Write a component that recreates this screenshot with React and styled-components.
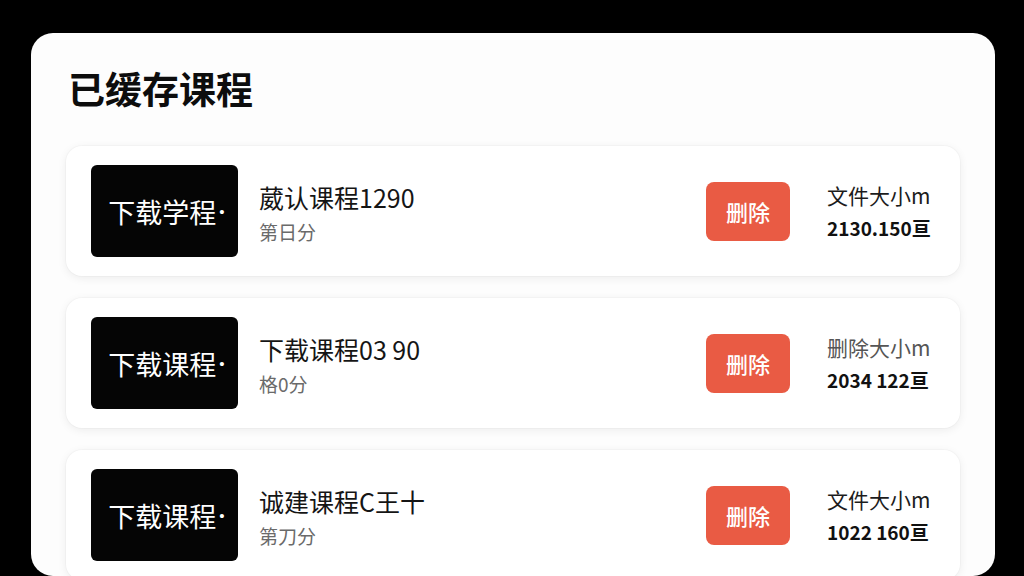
import React from 'react';
import styled, { createGlobalStyle } from 'styled-components';

const GlobalStyle = createGlobalStyle`
    html, body {
        margin: 0;
        padding: 0;
        background: #000;
    }
    body {
        font-family: "Noto Sans CJK SC", "Noto Sans", sans-serif;
    }
`;

// Black stage around the white sheet
const Stage = styled.div`
    width: 1024px;
    height: 576px;
    background: #000;
    padding: 33px 29px 0 31px;
    box-sizing: border-box;
    overflow: hidden;
`;

const Sheet = styled.div`
    background: #fdfdfd;
    border-radius: 22px;
    height: 543px;
    padding: 33px 35px 0 35px;
    box-sizing: border-box;
    overflow: hidden;
`;

const Title = styled.h1`
    margin: 0 0 35px 2px;
    font-size: 37px;
    font-weight: 700;
    line-height: 45px;
    color: #0d0d0d;
`;

const List = styled.div`
    display: flex;
    flex-direction: column;
    gap: 22px;
`;

const Card = styled.div`
    display: flex;
    align-items: center;
    height: 130px;
    padding: 0 28px 0 25px;
    box-sizing: border-box;
    background: #fff;
    border-radius: 16px;
    box-shadow: 0 2px 10px rgba(0, 0, 0, 0.07), 0 0 0 1px rgba(0, 0, 0, 0.02);
`;

const Thumb = styled.div`
    width: 147px;
    height: 92px;
    flex: none;
    background: #050505;
    border-radius: 6px;
    display: flex;
    align-items: center;
    justify-content: center;
    padding-left: 4px;
    box-sizing: border-box;
    color: #fff;
    font-size: 27px;
`;

const Dot = styled.span`
    font-family: "Liberation Sans", sans-serif;
    font-size: 15px;
    margin-left: 3px;
`;

const Info = styled.div`
    flex: 1;
    margin: 4px 0 0 21px;
    display: flex;
    flex-direction: column;
    gap: 4px;
`;

const CourseName = styled.div`
    font-size: 25px;
    line-height: 34px;
    color: #151515;
`;

const Meta = styled.div`
    font-size: 19px;
    line-height: 28px;
    color: #6a6a6a;
`;

const DeleteButton = styled.button`
    width: 84px;
    height: 59px;
    flex: none;
    border: none;
    border-radius: 8px;
    background: #e95b44;
    color: #fff;
    font-family: inherit;
    font-size: 22px;
    font-weight: 500;
    cursor: pointer;
`;

const Size = styled.div`
    width: 105px;
    flex: none;
    margin-left: 37px;
    display: flex;
    flex-direction: column;
    gap: 6px;
`;

const SizeLabel = styled.div`
    font-size: 21px;
    line-height: 28px;
    color: ${(p) => (p.muted ? '#555' : '#1c1c1c')};
    white-space: nowrap;
`;

const SizeValue = styled.div`
    font-size: 19px;
    line-height: 26px;
    font-weight: 700;
    color: #111;
    white-space: nowrap;
`;

const courses = [
    { thumb: '下载学程', name: '葳认课程1290', meta: '第日分', label: '文件大小m', size: '2130.150亘' },
    { thumb: '下载课程', name: '下载课程03 90', meta: '格0分', label: '删除大小m', size: '2034 122亘', muted: true },
    { thumb: '下载课程', name: '诚建课程C王十', meta: '第刀分', label: '文件大小m', size: '1022 160亘' },
];

const App = () => (
    <>
        <GlobalStyle />
        <Stage>
            <Sheet>
                <Title>已缓存课程</Title>
                <List>
                    {courses.map((c, i) => (
                        <Card key={i}>
                            <Thumb>
                                {c.thumb}
                                <Dot>•</Dot>
                            </Thumb>
                            <Info>
                                <CourseName>{c.name}</CourseName>
                                <Meta>{c.meta}</Meta>
                            </Info>
                            <DeleteButton>删除</DeleteButton>
                            <Size>
                                <SizeLabel muted={c.muted}>{c.label}</SizeLabel>
                                <SizeValue>{c.size}</SizeValue>
                            </Size>
                        </Card>
                    ))}
                </List>
            </Sheet>
        </Stage>
    </>
);

export default App;
